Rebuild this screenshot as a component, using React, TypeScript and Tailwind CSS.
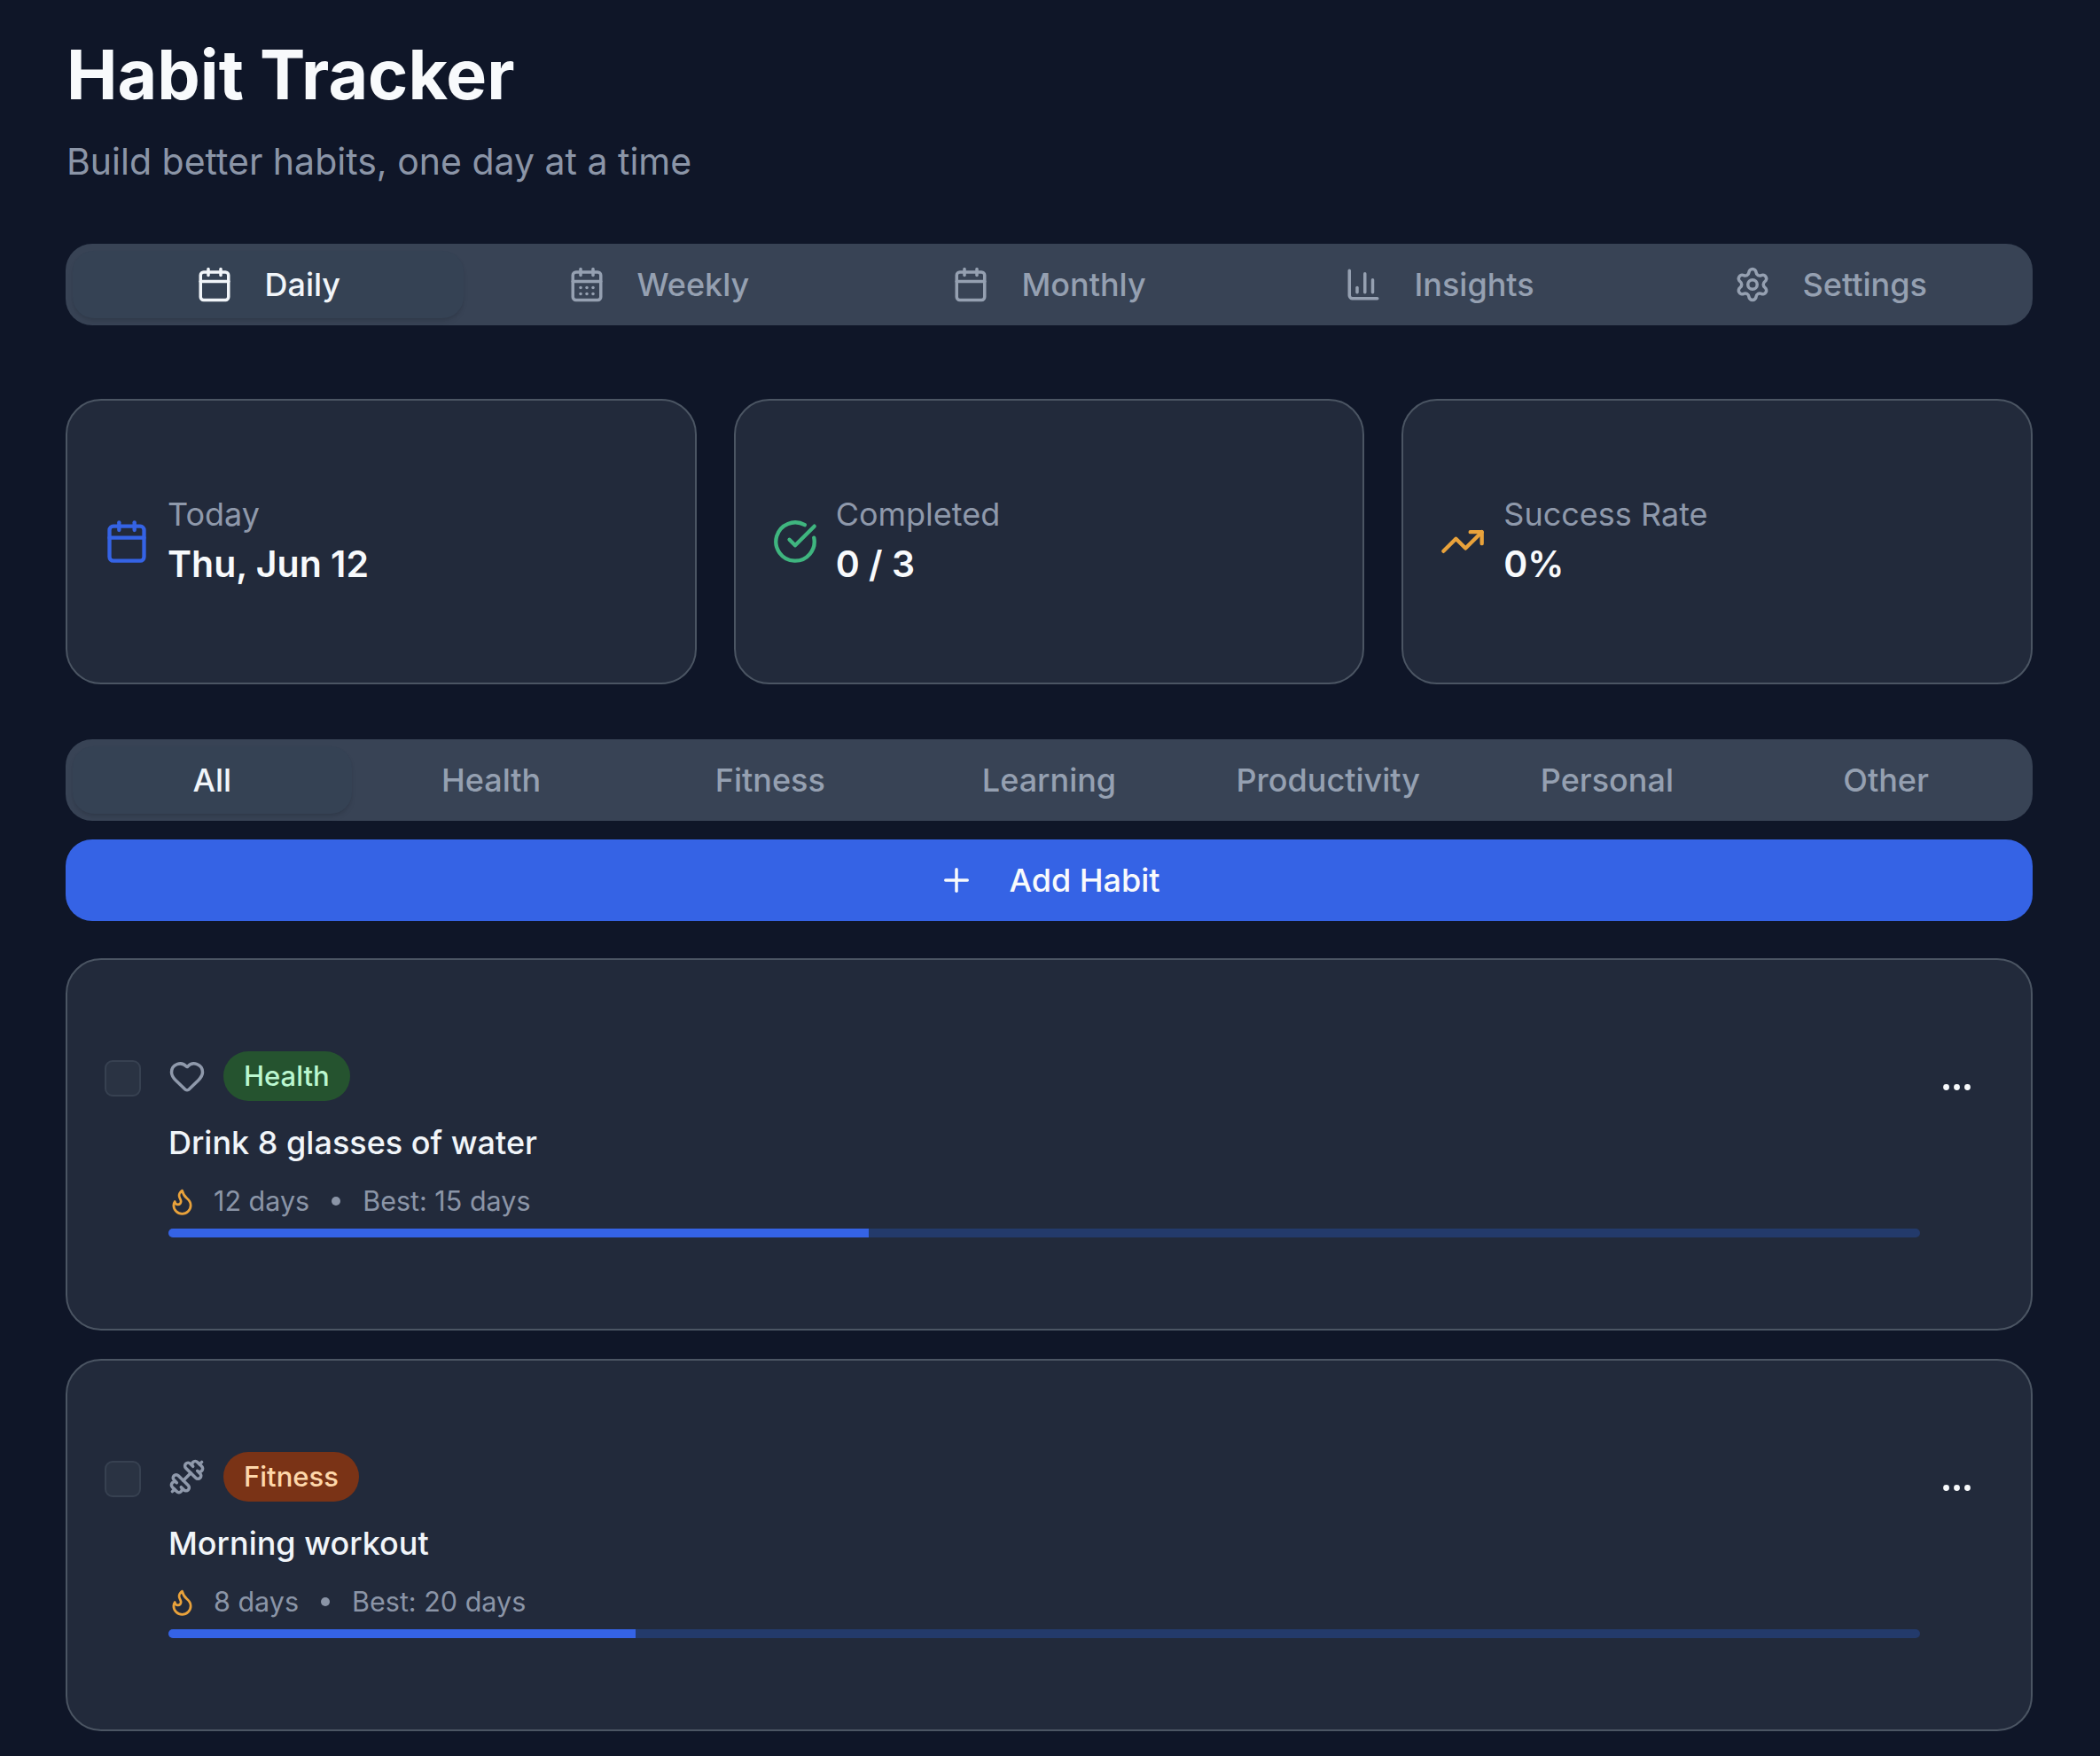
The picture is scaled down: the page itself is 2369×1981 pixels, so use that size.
import { Calendar, CalendarDays, ChartColumn, Settings, CircleCheckBig, TrendingUp, Plus, Heart, Dumbbell, Flame, Ellipsis } from "lucide-react";

const tabs = [
  { label: "Daily", Icon: Calendar, active: true },
  { label: "Weekly", Icon: CalendarDays },
  { label: "Monthly", Icon: Calendar },
  { label: "Insights", Icon: ChartColumn },
  { label: "Settings", Icon: Settings },
];
const filters = ["All", "Health", "Fitness", "Learning", "Productivity", "Personal", "Other"];

function Stat({ Icon, color, label, value }: { Icon: any; color: string; label: string; value: string }) {
  return (
    <div className="flex h-[322px] items-center gap-[20px] rounded-[40px] border-2 border-[#4b5563] bg-[#222a3b] pl-[41px]">
      <Icon size={52} className={color} strokeWidth={2} />
      <div className="flex flex-col pb-[3px]">
        <span className="text-[36px] leading-[50px] text-[#8f99ab]">{label}</span>
        <span className="mt-[3px] text-[41px] font-semibold leading-[56px] text-[#f8fafc]">{value}</span>
      </div>
    </div>
  );
}

function Habit({ Icon, tag, tagClass, name, days, best, pct }: { Icon: any; tag: string; tagClass: string; name: string; days: string; best: string; pct: number }) {
  return (
    <div className="flex h-[420px] items-start rounded-[40px] border-2 border-[#4b5563] bg-[#222a3b] pl-[42px] pr-[63px] pt-[103px]">
      <div className="mt-[10px] h-[41px] w-[41px] shrink-0 rounded-[9px] border-2 border-[#374151] bg-[#2a3343]" />
      <div className="ml-[31px] flex min-w-0 flex-1 flex-col">
        <div className="flex h-[56px] items-center gap-[20px]">
          <Icon size={42} className="text-[#8f99ab]" strokeWidth={2} />
          <span className={`flex h-[56px] items-center rounded-full px-[23px] text-[31px] font-medium ${tagClass}`}>{tag}</span>
        </div>
        <div className="mt-[20px] text-[36px] font-medium leading-[54px] text-[#f1f5f9]">{name}</div>
        <div className="mt-[16px] flex h-[46px] items-center text-[30.5px] leading-[46px] text-[#8b95a7]">
          <Flame size={33} className="ml-[-1px] text-[#e9a23b]" strokeWidth={2} />
          <span className="ml-[19px]">{days}</span>
          <span className="mx-[25px] h-[10px] w-[10px] rounded-full bg-[#8b95a7]" />
          <span>{best}</span>
        </div>
        <div className="mt-[8px] h-[10px] overflow-hidden rounded-full bg-[#233a6b]">
          <div className="h-full bg-[#3563e5]" style={{ width: `${pct}%` }} />
        </div>
      </div>
      <Ellipsis size={41} className="ml-[21px] mt-[20px] shrink-0 text-[#f8fafc]" strokeWidth={2} />
    </div>
  );
}

export default function App() {
  return (
    <div className="min-h-[1981px] bg-[#0f1628] pl-[74px] pr-[76px] pb-[29px] pt-[34px] font-['Inter',sans-serif]">
      <h1 className="ml-[1px] text-[77px] font-bold leading-[100px] text-[#f8fafc]">Habit Tracker</h1>
      <p className="ml-[1px] mt-[18px] text-[41px] leading-[60px] text-[#8b95a7]">Build better habits, one day at a time</p>

      <div className="mt-[63px] grid h-[92px] grid-cols-5 rounded-[30px] bg-[#384355] p-[8px]">
        {tabs.map(({ label, Icon, active }) => (
          <div key={label} className={`flex items-center justify-center gap-[36px] rounded-[24px] text-[36px] font-medium ${active ? "bg-[#354254] text-[#f1f5f9] shadow-md" : "text-[#95a0b1]"}`}>
            <Icon size={42} strokeWidth={2} />
            <span>{label}</span>
          </div>
        ))}
      </div>

      <div className="mt-[83px] grid grid-cols-3 gap-[42px]">
        <Stat Icon={Calendar} color="text-[#3563e5]" label="Today" value="Thu, Jun 12" />
        <Stat Icon={CircleCheckBig} color="text-[#3fb57f]" label="Completed" value="0 / 3" />
        <Stat Icon={TrendingUp} color="text-[#e9a23b]" label="Success Rate" value="0%" />
      </div>

      <div className="mt-[62px] grid h-[92px] grid-cols-7 rounded-[30px] bg-[#384355] p-[8px]">
        {filters.map((f, i) => (
          <div key={f} className={`flex items-center justify-center rounded-[24px] text-[36px] font-medium ${i === 0 ? "bg-[#354254] text-[#f1f5f9] shadow-md" : "text-[#95a0b1]"}`}>
            {f}
          </div>
        ))}
      </div>

      <div className="mt-[21px] flex h-[92px] items-center justify-center gap-[38px] rounded-[30px] bg-[#3563e5] text-[36px] font-medium text-[#f8fafc]">
        <Plus size={42} strokeWidth={2} />
        <span>Add Habit</span>
      </div>

      <div className="mt-[42px] flex flex-col gap-[32px]">
        <Habit Icon={Heart} tag="Health" tagClass="bg-[#25532f] text-[#bbf7d0]" name="Drink 8 glasses of water" days="12 days" best="Best: 15 days" pct={40} />
        <Habit Icon={Dumbbell} tag="Fitness" tagClass="bg-[#7a3316] text-[#fed7aa]" name="Morning workout" days="8 days" best="Best: 20 days" pct={26.67} />
      </div>
    </div>
  );
}
